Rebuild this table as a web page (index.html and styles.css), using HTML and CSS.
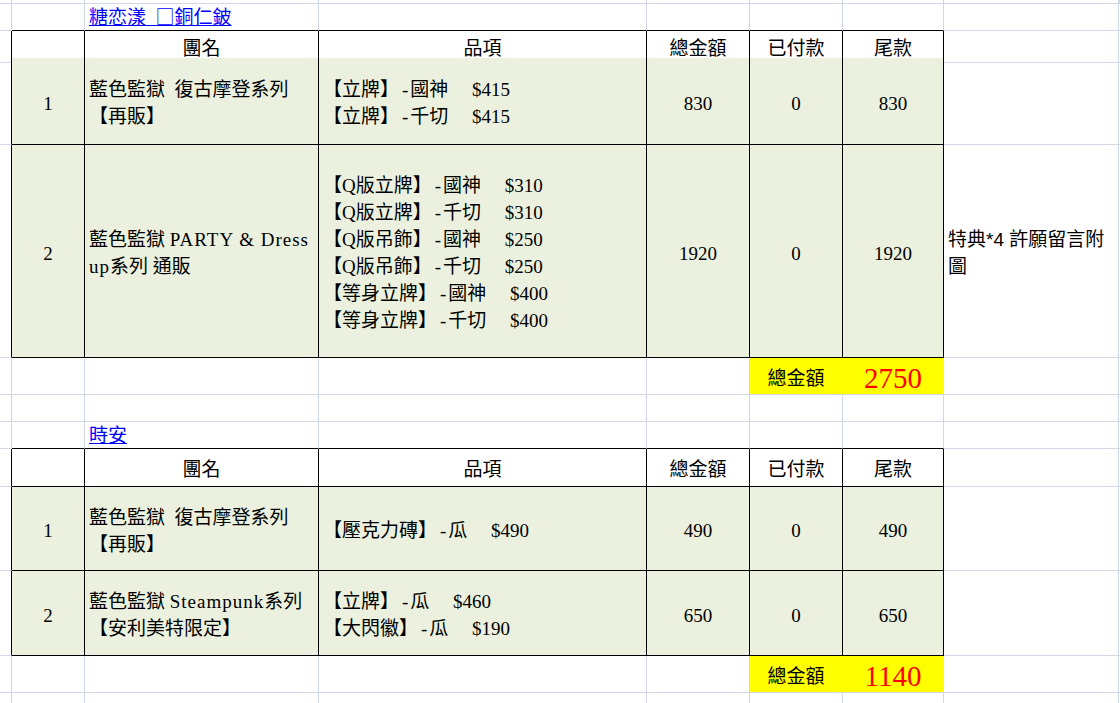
FILE: index.html
```html
<!DOCTYPE html>
<html lang="zh-Hant">
<head>
<meta charset="utf-8">
<title>訂單</title>
<link rel="stylesheet" href="styles.css">
</head>
<body>
<div class="sheet">
  <div class="row h4">
    <div class="c"></div><div class="c"></div><div class="c"></div><div class="c"></div><div class="c"></div><div class="c"></div><div class="c"></div><div class="c"></div><div class="c"></div>
  </div>
  <div class="row h27">
    <div class="c"></div><div class="c top"></div><div class="c top link"><a href="#">糖恋漾_<span class="cjk">□</span>銅仁鈹</a></div><div class="c top"></div><div class="c top"></div><div class="c top"></div><div class="c top"></div><div class="c"></div><div class="c"></div>
  </div>
  <div class="row h27">
    <div class="c edge"></div><div class="c t"></div><div class="c t mid">團名</div><div class="c t mid">品項</div><div class="c t mid">總金額</div><div class="c t mid">已付款</div><div class="c t mid">尾款</div><div class="c"></div><div class="c"></div>
  </div>
  <div class="row h87">
    <div class="c edge"></div>
    <div class="c t g mid">1</div>
    <div class="c t g"><div class="lines"><div>藍色監獄&nbsp; 復古摩登系列</div><div>【再販】</div></div></div>
    <div class="c t g"><div class="lines"><div>【立牌】<span class="dash">-</span>國神&emsp;&nbsp;$415</div><div>【立牌】<span class="dash">-</span>千切&emsp;&nbsp;$415</div></div></div>
    <div class="c t g mid">830</div>
    <div class="c t g mid">0</div>
    <div class="c t g mid">830</div>
    <div class="c"></div><div class="c"></div>
  </div>
  <div class="row h213">
    <div class="c edge"></div>
    <div class="c t g mid">2</div>
    <div class="c t g"><div class="lines"><div>藍色監獄 <span class="lat">PARTY &amp; Dress</span></div><div><span class="lat">up</span>系列 通販</div></div></div>
    <div class="c t g"><div class="lines">
      <div>【Q版立牌】<span class="dash">-</span>國神&emsp;&nbsp;$310</div>
      <div>【Q版立牌】<span class="dash">-</span>千切&emsp;&nbsp;$310</div>
      <div>【Q版吊飾】<span class="dash">-</span>國神&emsp;&nbsp;$250</div>
      <div>【Q版吊飾】<span class="dash">-</span>千切&emsp;&nbsp;$250</div>
      <div>【等身立牌】<span class="dash">-</span>國神&emsp;&nbsp;$400</div>
      <div>【等身立牌】<span class="dash">-</span>千切&emsp;&nbsp;$400</div>
    </div></div>
    <div class="c t g mid">1920</div>
    <div class="c t g mid">0</div>
    <div class="c t g mid">1920</div>
    <div class="c note"><div class="lines">特典*4 許願留言附圖</div></div>
    <div class="c"></div>
  </div>
  <div class="row h37">
    <div class="c"></div><div class="c"></div><div class="c"></div><div class="c"></div><div class="c"></div>
    <div class="c y mid">總金額</div>
    <div class="c y mid total">2750</div>
    <div class="c"></div><div class="c"></div>
  </div>
  <div class="row h27">
    <div class="c"></div><div class="c"></div><div class="c"></div><div class="c"></div><div class="c"></div><div class="c"></div><div class="c"></div><div class="c"></div><div class="c"></div>
  </div>
  <div class="row h27">
    <div class="c"></div><div class="c top"></div><div class="c top link"><a href="#">時安</a></div><div class="c top"></div><div class="c top"></div><div class="c top"></div><div class="c top"></div><div class="c"></div><div class="c"></div>
  </div>
  <div class="row h38">
    <div class="c edge"></div><div class="c t"></div><div class="c t mid">團名</div><div class="c t mid">品項</div><div class="c t mid">總金額</div><div class="c t mid">已付款</div><div class="c t mid">尾款</div><div class="c"></div><div class="c"></div>
  </div>
  <div class="row h84">
    <div class="c edge"></div>
    <div class="c t g mid">1</div>
    <div class="c t g"><div class="lines"><div>藍色監獄&nbsp; 復古摩登系列</div><div>【再販】</div></div></div>
    <div class="c t g"><div class="lines"><div>【壓克力磚】<span class="dash">-</span>瓜&emsp;&nbsp;$490</div></div></div>
    <div class="c t g mid">490</div>
    <div class="c t g mid">0</div>
    <div class="c t g mid">490</div>
    <div class="c"></div><div class="c"></div>
  </div>
  <div class="row h85">
    <div class="c edge"></div>
    <div class="c t g mid">2</div>
    <div class="c t g"><div class="lines"><div>藍色監獄 <span class="lat">Steampunk</span>系列</div><div>【安利美特限定】</div></div></div>
    <div class="c t g"><div class="lines"><div>【立牌】<span class="dash">-</span>瓜&emsp;&nbsp;$460</div><div>【大閃徽】<span class="dash">-</span>瓜&emsp;&nbsp;$190</div></div></div>
    <div class="c t g mid">650</div>
    <div class="c t g mid">0</div>
    <div class="c t g mid">650</div>
    <div class="c"></div><div class="c"></div>
  </div>
  <div class="row h37">
    <div class="c"></div><div class="c"></div><div class="c"></div><div class="c"></div><div class="c"></div>
    <div class="c y mid">總金額</div>
    <div class="c y mid total">1140</div>
    <div class="c"></div><div class="c"></div>
  </div>
  <div class="row h27">
    <div class="c"></div><div class="c"></div><div class="c"></div><div class="c"></div><div class="c"></div><div class="c"></div><div class="c"></div><div class="c"></div><div class="c"></div>
  </div>
</div>
</body>
</html>
```

FILE: styles.css
```css
html, body {
  margin: 0;
  padding: 0;
  background: #ffffff;
}

body {
  font-family: "Liberation Serif", "Noto Sans CJK TC", serif;
  font-size: 19px;
  color: #000000;
  overflow: hidden;
}

.sheet {
  width: 1120px;
}

.row {
  display: grid;
  grid-template-columns: 12px 73px 234px 328px 103px 93px 101px 175px 1fr;
}

.h4 { height: 4px; }
.h27 { height: 27px; }
.h37 { height: 37px; }
.h38 { height: 38px; }
.h84 { height: 84px; }
.h85 { height: 85px; }
.h87 { height: 87px; }
.h213 { height: 213px; }

.c {
  box-sizing: border-box;
  border-right: 1px solid #d0d7e5;
  border-bottom: 1px solid #d0d7e5;
  display: flex;
  align-items: center;
  padding: 4px 4px 0;
  min-width: 0;
  white-space: nowrap;
  line-height: 27px;
}

.h4 .c {
  padding: 0;
}

.edge { border-right-color: #000000; }
.top { border-bottom-color: #000000; }

.t {
  border-right-color: #000000;
  border-bottom-color: #000000;
  background: #ffffff;
}

.g { background: #ebf1de; }

.mid {
  justify-content: center;
  text-align: center;
}

.lines {
  line-height: 27px;
}

.lat {
  letter-spacing: 1px;
}

.dash {
  padding: 0 2px 0 3px;
}

.note {
  white-space: normal;
  font-family: "Liberation Sans", "Noto Sans CJK TC", sans-serif;
}

.y {
  background: #ffff00;
  border-right-color: #ffff00;
}

.total {
  color: #ff0000;
  font-size: 29px;
}

.link {
  align-items: flex-end;
  padding: 0 4px;
  line-height: 24px;
}

.link a {
  color: #0000ff;
  text-decoration: underline;
}

.cjk {
  font-family: "Noto Sans CJK TC", sans-serif;
}
```
